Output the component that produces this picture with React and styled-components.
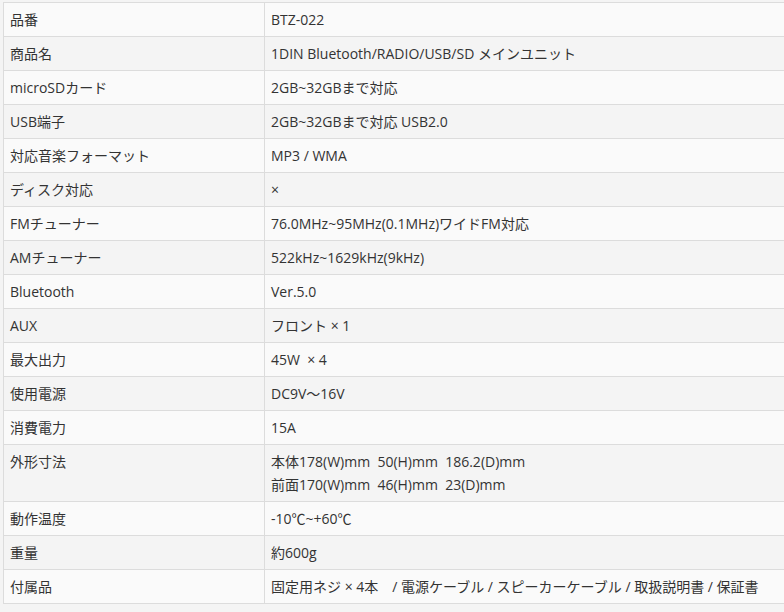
import React from "react";
import styled, { createGlobalStyle } from "styled-components";

const GlobalStyle = createGlobalStyle`
  html, body {
    margin: 0;
    padding: 0;
    background: #f4f4f4;
  }
  body {
    font-family: "Open Sans", "Noto Sans CJK JP", sans-serif;
    color: #333;
  }
`;

const Page = styled.div`
  width: 784px;
  height: 612px;
  overflow: hidden;
  padding: 2px 0 0 3px;
  box-sizing: border-box;
`;

const SpecTable = styled.table`
  width: 840px;
  border-collapse: collapse;
  font-size: 14px;
`;

const Row = styled.tr`
  background: ${({ $odd }) => ($odd ? "#fafafa" : "#f4f4f4")};
`;

const Cell = styled.td`
  border: 1px solid #dcdcdc;
  padding: 5px 6px;
  line-height: 23px;
  vertical-align: top;
  white-space: pre;
  width: ${({ $label }) => ($label ? "248px" : "auto")};
`;

const specs = [
  ["品番", "BTZ-022"],
  ["商品名", "1DIN Bluetooth/RADIO/USB/SD メインユニット"],
  ["microSDカード", "2GB~32GBまで対応"],
  ["USB端子", "2GB~32GBまで対応 USB2.0"],
  ["対応音楽フォーマット", "MP3 / WMA"],
  ["ディスク対応", "×"],
  ["FMチューナー", "76.0MHz~95MHz(0.1MHz)ワイドFM対応"],
  ["AMチューナー", "522kHz~1629kHz(9kHz)"],
  ["Bluetooth", "Ver.5.0"],
  ["AUX", "フロント × 1"],
  ["最大出力", "45W  × 4"],
  ["使用電源", "DC9V～16V"],
  ["消費電力", "15A"],
  ["外形寸法", ["本体178(W)mm  50(H)mm  186.2(D)mm", "前面170(W)mm  46(H)mm  23(D)mm"]],
  ["動作温度", "-10℃~+60℃"],
  ["重量", "約600g"],
  ["付属品", "固定用ネジ × 4本　/ 電源ケーブル / スピーカーケーブル / 取扱説明書 / 保証書"],
];

const Value = ({ value }) =>
  Array.isArray(value)
    ? value.map((line, i) => (
        <React.Fragment key={i}>
          {i > 0 && <br />}
          {line}
        </React.Fragment>
      ))
    : value;

export default function App() {
  return (
    <>
      <GlobalStyle />
      <Page>
        <SpecTable>
          <tbody>
            {specs.map(([label, value], i) => (
              <Row key={label} $odd={i % 2 === 0}>
                <Cell $label>{label}</Cell>
                <Cell>
                  <Value value={value} />
                </Cell>
              </Row>
            ))}
          </tbody>
        </SpecTable>
      </Page>
    </>
  );
}
